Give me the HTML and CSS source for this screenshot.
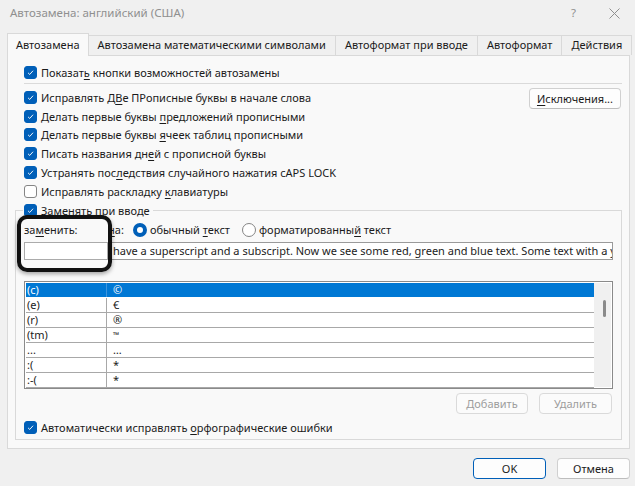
FILE: index.html
```html
<!DOCTYPE html>
<html lang="ru">
<head>
<meta charset="utf-8">
<title>Автозамена</title>
<link rel="stylesheet" href="styles.css">
</head>
<body>
<div class="dialog">
  <div class="titlebar">
    <span class="title">Автозамена: английский (США)</span>
    <span class="tb-help">?</span>
    <span class="tb-close"><svg width="11" height="11" viewBox="0 0 11 11"><path d="M0.5 0.5L10.5 10.5M10.5 0.5L0.5 10.5" stroke="#8f8f8f" stroke-width="1" fill="none"/></svg></span>
  </div>
  <div class="tabs">
    <div class="tab active">Автозамена</div>
    <div class="tab">Автозамена математическими символами</div>
    <div class="tab">Автоформат при вводе</div>
    <div class="tab">Автоформат</div>
    <div class="tab">Действия</div>
  </div>
  <div class="panel">
    <div class="cb-row"><span class="cb on"><svg viewBox="0 0 13 13"><path d="M3.6 6.9l2 1.9 3.9-4.4" /></svg></span><span>Показат<u>ь</u> кнопки возможностей автозамены</span></div>
    <div class="sep"></div>
    <div class="opts">
      <div class="opt-list">
        <div class="cb-row"><span class="cb on"><svg viewBox="0 0 13 13"><path d="M3.6 6.9l2 1.9 3.9-4.4" /></svg></span><span>Исправлять Д<u>В</u>е ПРописные буквы в начале слова</span></div>
        <div class="cb-row"><span class="cb on"><svg viewBox="0 0 13 13"><path d="M3.6 6.9l2 1.9 3.9-4.4" /></svg></span><span>Делать первые буквы <u>п</u>редложений прописными</span></div>
        <div class="cb-row"><span class="cb on"><svg viewBox="0 0 13 13"><path d="M3.6 6.9l2 1.9 3.9-4.4" /></svg></span><span>Делать первые буквы <u>я</u>чеек таблиц прописными</span></div>
        <div class="cb-row"><span class="cb on"><svg viewBox="0 0 13 13"><path d="M3.6 6.9l2 1.9 3.9-4.4" /></svg></span><span>Писать названия дн<u>е</u>й с прописной буквы</span></div>
        <div class="cb-row"><span class="cb on"><svg viewBox="0 0 13 13"><path d="M3.6 6.9l2 1.9 3.9-4.4" /></svg></span><span>Устранять пос<u>л</u>едствия случайного нажатия cAPS LOCK</span></div>
        <div class="cb-row"><span class="cb"></span><span>Исправлять раскладку <u>к</u>лавиатуры</span></div>
      </div>
      <button class="btn exc"><u>И</u>сключения...</button>
    </div>
    <fieldset class="group">
      <legend class="legend"><span class="cb on"><svg viewBox="0 0 13 13"><path d="M3.6 6.9l2 1.9 3.9-4.4" /></svg></span><span>З<u>а</u>менять при вводе</span></legend>
      <div class="labels">
        <span class="lbl-from">за<u>м</u>енить:</span>
        <span class="lbl-to"><u>н</u>а:</span>
        <span class="radio on"></span><span class="rtext">обычный <u>т</u>екст</span>
        <span class="radio"></span><span class="rtext">форматированны<u>й</u> текст</span>
      </div>
      <div class="inputs">
        <div class="input in-from"></div>
        <div class="input in-to">have a superscript and a subscript. Now we see some red, green and blue text. Some text with a yellow highlight</div>
      </div>
      <div class="list">
        <div class="list-table">
          <div class="lrow sel"><span class="c1">(c)</span><span class="c2">©</span></div>
          <div class="lrow"><span class="c1">(e)</span><span class="c2">€</span></div>
          <div class="lrow"><span class="c1">(r)</span><span class="c2">®</span></div>
          <div class="lrow"><span class="c1">(tm)</span><span class="c2 small">™</span></div>
          <div class="lrow"><span class="c1">...</span><span class="c2">…</span></div>
          <div class="lrow"><span class="c1">:(</span><span class="c2">*</span></div>
          <div class="lrow"><span class="c1">:-(</span><span class="c2">*</span></div>
        </div>
        <div class="scroll"><div class="thumb"></div></div>
      </div>
      <div class="list-buttons">
        <button class="btn dis">Добавить</button>
        <button class="btn dis">Удалить</button>
      </div>
      <div class="cb-row auto"><span class="cb on"><svg viewBox="0 0 13 13"><path d="M3.6 6.9l2 1.9 3.9-4.4" /></svg></span><span>Автоматически исправлять <u>о</u>рфографические ошибки</span></div>
    </fieldset>
  </div>
  <div class="footer">
    <button class="btn default">OK</button>
    <button class="btn">Отмена</button>
  </div>
  <div class="callout"></div>
</div>
</body>
</html>
```
FILE: styles.css
```css
* { box-sizing: border-box; }
html, body { margin: 0; padding: 0; }
body {
  width: 635px;
  height: 486px;
  overflow: hidden;
  background: #f0f0f0;
  font-family: "Noto Sans", "Segoe UI", sans-serif;
  font-size: 11px;
  color: #1b1b1b;
}
u { text-decoration: underline; text-underline-offset: 2px; text-decoration-thickness: 1px; }

.dialog { position: relative; width: 635px; height: 486px; display: flex; flex-direction: column; }

.titlebar { height: 33px; display: flex; align-items: flex-start; padding: 5px 15px 0 10px; line-height: 16px; color: #8f8f8f; font-size: 11.5px; }
.title { flex: 1; }
.tb-help { margin-right: 33px; }
.tb-close { display: flex; padding-top: 3px; }

.tabs { height: 22px; display: flex; align-items: flex-end; padding-left: 7px; }
.tab {
  height: 20px; line-height: 18px; padding: 0 9px;
  border: 1px solid #d9d9d9; border-bottom: none;
  background: #f0f0f0; margin-left: -1px; white-space: nowrap;
}
.tab.active { height: 23px; margin-bottom: -1px; margin-left: 0; background: #f9f9f9; position: relative; z-index: 1; line-height: 21px; padding: 0 8px; }

.panel {
  margin: 0 5px 0 7px;
  border: 1px solid #d9d9d9;
  background: #f9f9f9;
  padding: 7px 7px 8px 7px;
}

.cb-row { height: 19px; display: flex; align-items: center; padding-left: 9px; white-space: nowrap; }
.opt-list .cb-row { height: 18.8px; }
.cb {
  width: 13px; height: 13px; border-radius: 3px; flex: none;
  border: 1px solid #858585; background: #fff; margin-right: 4px;
  display: flex; align-items: center; justify-content: center;
}
.cb.on { background: #005fb8; border-color: #005fb8; }
.cb svg { width: 13px; height: 13px; }
.cb svg path { fill: none; stroke: #fff; stroke-width: 1.1; }

.sep { height: 1px; background: #dadada; margin: 1px 0 4px 9px; }

.opts { display: flex; justify-content: space-between; align-items: flex-start; }

.btn {
  font-family: inherit; font-size: 11px; color: #1b1b1b;
  height: 21px; padding: 0; background: #fdfdfd;
  border: 1px solid #d0d0d0; border-bottom-color: #bdbdbd; border-radius: 4px;
}
.exc { width: 92px; margin-right: 1px; }

.group {
  margin: 0; min-width: 0;
  border: 1px solid #d9d9d9;
  padding: 0 8px 2px 8px;
}
.legend { display: flex; align-items: center; height: 19px; padding: 0 3px 0 1px; margin-left: -1px; white-space: nowrap; }

.labels { display: flex; align-items: center; height: 18px; margin-top: 1px; white-space: nowrap; }
.lbl-from { width: 84px; }
.lbl-to { width: 25px; }
.radio { width: 14px; height: 14px; border-radius: 50%; border: 1px solid #858585; background: #fff; flex: none; margin-right: 3px; }
.radio.on { border: 4.5px solid #005fb8; background: #fff; }
.rtext { margin-right: 12px; }

.inputs { display: flex; height: 18px; margin-top: 3px; }
.input { height: 18px; background: #fff; border: 1px solid #9a9a9a; line-height: 16px; white-space: nowrap; overflow: hidden; }
.in-from { width: 84px; border-color: #ababab; }
.in-to { flex: 1; margin-left: 1px; padding-left: 3px; }

.list { display: flex; height: 108px; margin-top: 21px; border: 1px solid #8a8a8a; padding: 1px; background: #fff; }
.list-table { flex: 1; }
.lrow { display: flex; height: 15px; border-bottom: 1px solid #a8a8a8; line-height: 14px; }
.lrow .c1 { width: 81px; border-right: 1px solid #a8a8a8; padding-left: 1px; }
.lrow .c2 { padding-left: 6px; }
.lrow .small { font-size: 8px; }
.lrow.sel { background: #0078d4; color: #fff; border-bottom-color: #ffffff; }
.lrow.sel .c1 { border-right-color: #3d95dd; }
.scroll { width: 17px; background: #f0f0f0; padding: 17px 0 0 9px; }
.thumb { width: 3px; height: 17px; background: #8a8a8a; border-radius: 2px; }

.list-buttons { display: flex; justify-content: flex-end; gap: 11px; margin-top: 4px; margin-right: 1px; }
.btn.dis { width: 72px; color: #9d9d9d; background: #fbfbfb; border-color: #dadada; }
.list-buttons .btn.dis:last-child { width: 73px; }

.auto { margin-top: 4px; padding-left: 0; }

.footer { display: flex; justify-content: flex-end; gap: 11px; margin-top: 9px; padding-right: 5px; }
.footer .btn { width: 73px; }
.btn.default { border: 1px solid #005fb8; }

.callout {
  position: absolute; left: 17px; top: 215px; width: 95px; height: 57px;
  border: 4px solid #111; border-radius: 10px;
  box-shadow: 0 2px 4px rgba(0,0,0,0.35);
}
```
